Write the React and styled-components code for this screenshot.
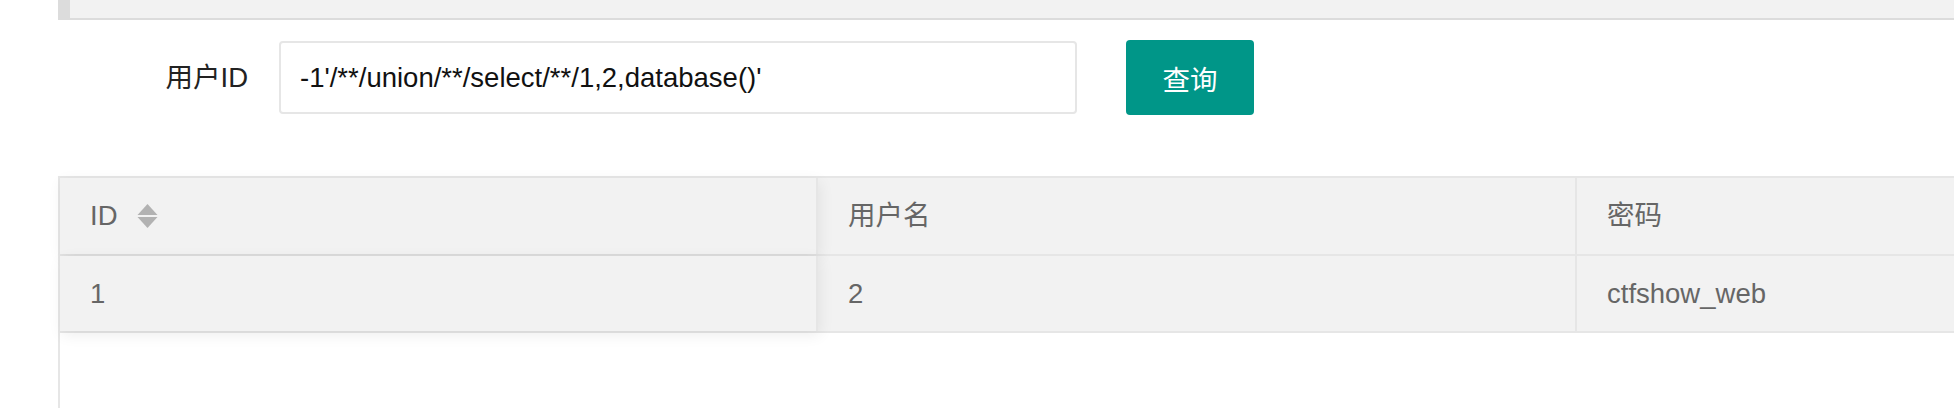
import React from 'react';
import styled, { createGlobalStyle } from 'styled-components';

const GlobalStyle = createGlobalStyle`
  html, body {
    margin: 0;
    padding: 0;
    background: #fff;
    overflow: hidden;
  }
  body {
    font-family: "Liberation Sans", Arial, "Noto Sans CJK SC", sans-serif;
    font-size: 27.5px;
    color: #333;
  }
`;

const Page = styled.div`
  width: 1954px;
  height: 408px;
  padding-left: 58px;
  box-sizing: border-box;
  overflow: hidden;
`;

const Quote = styled.div`
  height: 18px;
  background: #f2f2f2;
  border-left: 12px solid #dcdcdc;
  border-bottom: 2px solid #dcdcdc;
`;

const FormRow = styled.form`
  display: flex;
  align-items: center;
  margin-top: 20px;
  height: 75px;
`;

const Label = styled.label`
  width: 190px;
  margin-right: 31px;
  text-align: right;
  color: #222;
  line-height: 1;
`;

const Input = styled.input`
  width: 798px;
  height: 73px;
  box-sizing: border-box;
  border: 2px solid #e6e6e6;
  border-radius: 4px;
  padding: 0 19px;
  font: inherit;
  color: #111;
  outline: none;
  background: #fff;
`;

const Button = styled.button`
  margin-left: 49px;
  width: 128px;
  height: 75px;
  border: none;
  border-radius: 4px;
  background: #009688;
  color: #fff;
  font: inherit;
  cursor: pointer;
`;

const TableBox = styled.div`
  margin-top: 61px;
  width: 2400px;
  height: 240px;
  border-left: 2px solid #e6e6e6;
  border-top: 2px solid #e6e6e6;
  background: #fff;
  position: relative;
`;

const Row = styled.div`
  display: flex;
  height: ${(p) => p.h}px;
  background: #f2f2f2;
  border-bottom: 2px solid #e6e6e6;
`;

const Cell = styled.div`
  width: ${(p) => (p.first ? 758 : 759)}px;
  flex: none;
  display: flex;
  align-items: center;
  gap: 19px;
  padding-left: 30px;
  box-sizing: border-box;
  border-right: 2px solid #e6e6e6;
  color: #666;
  line-height: 1;
  position: relative;
  z-index: ${(p) => (p.first ? 1 : 0)};
  box-shadow: ${(p) => (p.first ? '2px 4px 14px rgba(0,0,0,.07)' : 'none')};
  background: #f2f2f2;
`;

const SortIcon = () => (
  <svg width="21" height="25" viewBox="0 0 21 25">
    <polygon points="10.5,0 20.5,11 0.5,11" fill="#b2b2b2" />
    <polygon points="0.5,13 20.5,13 10.5,24" fill="#b2b2b2" />
  </svg>
);

const columns = [
  { key: 'id', title: 'ID', sort: true },
  { key: 'username', title: '用户名' },
  { key: 'password', title: '密码' },
];

const data = [{ id: '1', username: '2', password: 'ctfshow_web' }];

export default function App() {
  return (
    <>
      <GlobalStyle />
      <Page>
        <Quote />
        <FormRow onSubmit={(e) => e.preventDefault()}>
          <Label>用户ID</Label>
          <Input defaultValue="-1'/**/union/**/select/**/1,2,database()'" />
          <Button type="submit">查询</Button>
        </FormRow>
        <TableBox>
          <Row h={76}>
            {columns.map((c, i) => (
              <Cell key={c.key} first={i === 0}>
                <span>{c.title}</span>
                {c.sort && <SortIcon />}
              </Cell>
            ))}
          </Row>
          {data.map((d, r) => (
            <Row key={r} h={75}>
              {columns.map((c, i) => (
                <Cell key={c.key} first={i === 0}>
                  {d[c.key]}
                </Cell>
              ))}
            </Row>
          ))}
        </TableBox>
      </Page>
    </>
  );
}
